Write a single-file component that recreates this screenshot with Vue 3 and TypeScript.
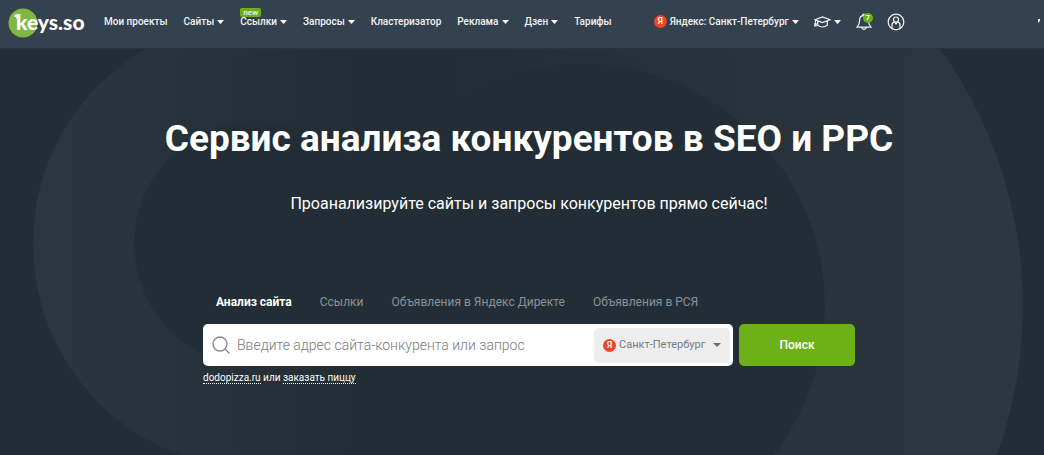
<script setup lang="ts">
import { ref } from 'vue'

interface NavItem {
  label: string
  menu: boolean
  badge?: string
}

const navItems: NavItem[] = [
  { label: 'Мои проекты', menu: false },
  { label: 'Сайты', menu: true },
  { label: 'Ссылки', menu: true, badge: 'new' },
  { label: 'Запросы', menu: true },
  { label: 'Кластеризатор', menu: false },
  { label: 'Реклама', menu: true },
  { label: 'Дзен', menu: true },
  { label: 'Тарифы', menu: false },
]

const tabs: string[] = ['Анализ сайта', 'Ссылки', 'Объявления в Яндекс Директе', 'Объявления в РСЯ']
const activeTab = ref<number>(0)
const query = ref<string>('')
const region = ref<string>('Санкт-Петербург')
</script>

<template>
  <div class="page">
    <header class="header">
      <a class="logo" href="#" aria-label="keys.so">
        <svg class="logo-disc" viewBox="0 0 30 30" aria-hidden="true">
          <circle cx="15" cy="15" r="14.5" fill="#7fb842" />
          <path d="M6.500 6.500h5v4H8.300V9H6.500z" fill="#fff" />
        </svg>
        <span class="logo-text">keys.so</span>
      </a>

      <nav class="nav" aria-label="Главное меню">
        <template v-for="item in navItems" :key="item.label">
          <button v-if="item.menu" class="nav-item" type="button">
            {{ item.label }}
            <svg class="caret" viewBox="0 0 7 4" aria-hidden="true"><path d="M0 0h7L3.500 4z" /></svg>
            <span v-if="item.badge" class="new-badge">{{ item.badge }}</span>
          </button>
          <a v-else class="nav-item" href="#">{{ item.label }}</a>
        </template>
      </nav>

      <div class="tools">
        <button class="nav-item" type="button">
          <span class="ya">Я</span>
          Яндекс: Санкт-Петербург
          <svg class="caret" viewBox="0 0 7 4" aria-hidden="true"><path d="M0 0h7L3.500 4z" /></svg>
        </button>
        <button class="nav-item" type="button" aria-label="Обучение">
          <svg class="cap" viewBox="0 0 17 12" aria-hidden="true">
            <path d="M1 3.7 8.5 1 16 3.7 8.5 6.5zM3.7 4.9v4.3c2.8 2.2 6.8 2.2 9.6 0V4.9M1.5 4v3.8M.8 7.8h1.4v2H.8z" />
          </svg>
          <svg class="caret" viewBox="0 0 7 4" aria-hidden="true"><path d="M0 0h7L3.500 4z" /></svg>
        </button>
        <button class="icon-button" type="button" aria-label="Уведомления">
          <svg viewBox="0 0 16 18" aria-hidden="true">
            <path d="M8 2.7c-3 0-4.4 2-4.4 4.6 0 3.5-.8 5-2.5 6.8h13.8c-1.7-1.8-2.5-3.3-2.5-6.8C12.400 4.700 11 2.700 8 2.700zM6.900 2.500V1.300h2.200v1.200M5.900 14.300c.2 2.800 4 2.800 4.200 0" />
          </svg>
          <span class="count">7</span>
        </button>
        <button class="icon-button" type="button" aria-label="Профиль">
          <svg viewBox="0 0 18 18" aria-hidden="true">
            <circle cx="9" cy="9" r="7.800" />
            <circle cx="9" cy="6.500" r="2.500" />
            <path d="M5 15.600V12c0-1.700 1-2.700 2.400-3.100M13 15.600V12c0-1.700-1-2.700-2.400-3.100M7.500 9l1.500 2 1.500-2" />
          </svg>
        </button>
      </div>

      <svg class="edge-mark" viewBox="0 0 4 4" aria-hidden="true"><path d="M1 0h2v2L1 4z" /></svg>
    </header>

    <main class="hero">
      <svg class="rings" viewBox="0 48 1044 407" preserveAspectRatio="xMidYMin slice" aria-hidden="true">
        <defs>
          <linearGradient id="ring-left" gradientUnits="userSpaceOnUse" x1="33" y1="0" x2="360" y2="0">
            <stop offset="0" stop-color="#2c363e" />
            <stop offset="0.400" stop-color="#28323a" />
            <stop offset="1" stop-color="#232d35" />
          </linearGradient>
          <linearGradient id="ring-right" gradientUnits="userSpaceOnUse" x1="440" y1="0" x2="1023" y2="0">
            <stop offset="0" stop-color="#232d35" />
            <stop offset="0.550" stop-color="#28323a" />
            <stop offset="1" stop-color="#2d373f" />
          </linearGradient>
        </defs>
        <circle cx="257" cy="243" r="173.500" fill="none" stroke="url(#ring-left)" stroke-width="101" />
        <path d="M583 -135A440 440 0 0 1 583 745V547A242 242 0 0 0 583 63Q500 63 440 110V-96z" fill="url(#ring-right)" />
      </svg>

      <div class="content">
        <h1>Сервис анализа конкурентов в SEO и PPC</h1>
        <p class="lead">Проанализируйте сайты и запросы конкурентов прямо сейчас!</p>

        <form class="search" @submit.prevent>
          <div class="tabs" role="tablist">
            <button
              v-for="(tab, i) in tabs"
              :key="tab"
              type="button"
              role="tab"
              class="tab"
              :class="{ active: i === activeTab }"
              :aria-selected="i === activeTab"
              @click="activeTab = i"
            >{{ tab }}</button>
          </div>

          <div class="row">
            <div class="field">
              <svg class="lens" viewBox="0 0 18 18" aria-hidden="true">
                <circle cx="8" cy="8" r="7" /><path d="m13 13 4.500 4.500" />
              </svg>
              <input
                v-model="query"
                class="query"
                type="text"
                aria-label="Адрес сайта или запрос"
                placeholder="Введите адрес сайта-конкурента или запрос"
              />
              <label class="city">
                <span class="ya">Я</span>
                <select v-model="region" aria-label="Регион">
                  <option>Санкт-Петербург</option>
                </select>
                <svg class="city-caret" viewBox="0 0 8 4" aria-hidden="true"><path d="M0 0h8L4 4z" /></svg>
              </label>
            </div>
            <button class="submit" type="submit">Поиск</button>
          </div>

          <p class="examples"><a href="#">dodopizza.ru</a> или <a href="#">заказать пиццу</a></p>
        </form>
      </div>
    </main>
  </div>
</template>

<style>
body {
  margin: 0;
  background: #232d35;
}
</style>

<style scoped>
.page {
  display: flex;
  flex-direction: column;
  min-height: 100vh;
  font-family: Roboto, "Liberation Sans", sans-serif;
  color: #fff;
  background: #232d35;
}

button,
input,
select {
  font: inherit;
  color: inherit;
  border: 0;
  padding: 0;
  margin: 0;
  background: none;
}

button {
  cursor: pointer;
}

.header {
  display: flex;
  align-items: flex-start;
  box-sizing: border-box;
  height: 49px;
  padding: 8px 3px 0 8px;
  background: #34414e;
  border-bottom: 1px solid #29333d;
}

.logo {
  position: relative;
  display: block;
  flex: none;
  width: 96px;
  height: 30px;
  color: #fff;
  text-decoration: none;
}

.logo-disc {
  display: block;
  width: 30px;
  height: 30px;
}

.logo-text {
  position: absolute;
  left: 8px;
  top: 2px;
  font: 900 21px/24px Lato, sans-serif;
}

.nav,
.tools {
  display: flex;
  align-items: center;
  height: 27px;
  gap: 16px;
}

.tools {
  gap: 15px;
  margin-left: 42px;
}

.nav-item {
  position: relative;
  display: flex;
  align-items: center;
  gap: 3px;
  font-size: 10px;
  font-weight: 500;
  line-height: 16px;
  white-space: nowrap;
  color: #f1f3f4;
  text-decoration: none;
}

.caret {
  width: 7px;
  height: 4px;
  fill: #fff;
}

.new-badge {
  position: absolute;
  left: 0;
  top: -6px;
  padding: 0 3px;
  border-radius: 2px;
  background: #6aaf1c;
  font-size: 8px;
  font-weight: 500;
  line-height: 9px;
}

.ya {
  flex: none;
  width: 13px;
  height: 13px;
  border-radius: 50%;
  background: #ee4527;
  color: #fff;
  font-size: 9px;
  font-weight: 500;
  line-height: 13px;
  text-align: center;
}

.cap {
  width: 17px;
  height: 12px;
}

.cap,
.icon-button svg {
  fill: none;
  stroke: #f1f3f4;
  stroke-width: 1.2;
}

.icon-button {
  position: relative;
  display: block;
  width: 16px;
  height: 18px;
}

.icon-button svg {
  display: block;
  width: 100%;
  height: 100%;
}

.icon-button:last-child {
  width: 18px;
}

.count {
  position: absolute;
  right: -1px;
  top: 0;
  width: 10px;
  height: 10px;
  border-radius: 50%;
  background: #63b01a;
  font-size: 8px;
  font-weight: 500;
  line-height: 10px;
  text-align: center;
}

.edge-mark {
  width: 4px;
  height: 4px;
  margin: 11px 0 0 auto;
  fill: #fff;
}

.hero {
  position: relative;
  flex: 1;
  overflow: hidden;
}

.rings {
  position: absolute;
  inset: 0;
  width: 100%;
  height: 100%;
}

.content {
  position: relative;
  display: flex;
  flex-direction: column;
  align-items: center;
  padding: 68px 16px 32px 30px;
}

h1 {
  margin: 0 0 31px;
  font-size: 37px;
  font-weight: 700;
  line-height: 44px;
  text-align: center;
}

.lead {
  margin: 0 0 76px;
  font-size: 16px;
  line-height: 24px;
  text-align: center;
}

.search {
  width: 100%;
  max-width: 652px;
}

.tabs {
  display: flex;
  gap: 28px;
  padding: 0 13px;
  margin-bottom: 12px;
}

.tab {
  font-size: 12px;
  line-height: 20px;
  color: #89929a;
  white-space: nowrap;
}

.tab.active {
  font-weight: 700;
  color: #fff;
}

.row {
  display: flex;
  gap: 6px;
}

.field {
  display: flex;
  flex: 1;
  align-items: center;
  box-sizing: border-box;
  height: 42px;
  padding: 0 3px 0 9px;
  border-radius: 5px;
  background: #fff;
}

.lens {
  flex: none;
  width: 18px;
  height: 18px;
  margin-right: 7px;
  fill: none;
  stroke: #85898d;
  stroke-width: 1.3;
}

.query {
  flex: 1;
  min-width: 0;
  height: 36px;
  outline: none;
  font-size: 14px;
  font-weight: 300;
  color: #333c44;
}

.query::placeholder {
  color: #777c80;
  opacity: 1;
}

.city {
  display: flex;
  align-items: center;
  box-sizing: border-box;
  height: 35px;
  padding: 0 9px;
  gap: 3px;
  border-radius: 5px;
  background: #ededed;
  color: #747c84;
}

.city select {
  appearance: none;
  outline: none;
  font-size: 11px;
  line-height: 16px;
}

.city-caret {
  width: 8px;
  height: 4px;
  margin-left: 4px;
  fill: #666d74;
}

.submit {
  flex: none;
  width: 116px;
  height: 42px;
  border-radius: 5px;
  background: #6eb017;
  font-size: 12px;
  font-weight: 500;
}

.examples {
  margin: 5px 0 0;
  font-size: 10px;
  line-height: 14px;
}

.examples a {
  color: inherit;
  text-decoration: none;
  border-bottom: 1px dotted #fff;
}
</style>
